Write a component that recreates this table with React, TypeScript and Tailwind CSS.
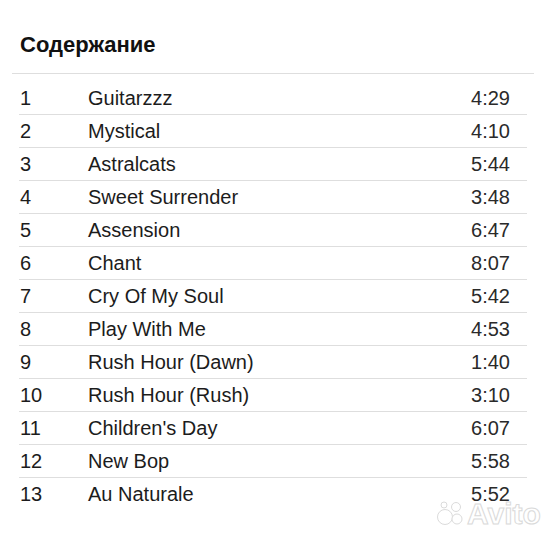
import React from "react";

const tracks: [string, string, string][] = [
  ["1", "Guitarzzz", "4:29"],
  ["2", "Mystical", "4:10"],
  ["3", "Astralcats", "5:44"],
  ["4", "Sweet Surrender", "3:48"],
  ["5", "Assension", "6:47"],
  ["6", "Chant", "8:07"],
  ["7", "Cry Of My Soul", "5:42"],
  ["8", "Play With Me", "4:53"],
  ["9", "Rush Hour (Dawn)", "1:40"],
  ["10", "Rush Hour (Rush)", "3:10"],
  ["11", "Children's Day", "6:07"],
  ["12", "New Bop", "5:58"],
  ["13", "Au Naturale", "5:52"],
];

export default function App() {
  return (
    <div
      className="relative w-[541px] h-[540px] bg-white overflow-hidden text-[#1c1c1c]"
      style={{ fontFamily: '"Liberation Sans", Arial, sans-serif' }}
    >
      <div className="pt-[32px] pl-[20px] text-[22px] leading-[26px] font-bold text-[#111]">
        Содержание
      </div>
      <div className="mt-[15px] ml-[12px] mr-[7px] h-px bg-[#dedede]" />
      <div className="mt-[8px] ml-[19px] mr-[14px]">
        {tracks.map(([n, t, d], i) => (
          <div
            key={n}
            className={`flex items-center h-[33px] text-[20px] leading-[33px] ${
              i < tracks.length - 1 ? "border-b border-[#dedede]" : ""
            }`}
          >
            <div className="w-[69px] pl-[1px]">{n}</div>
            <div className="flex-1">{t}</div>
            <div className="pr-[17px] text-[#2a2a2a]">{d}</div>
          </div>
        ))}
      </div>
      <div className="absolute left-[436px] top-[499px] flex items-center gap-[3px] opacity-90">
        <svg width="28" height="26" viewBox="0 0 28 26">
          <g fill="#ffffff" stroke="#d8d8d8" strokeWidth="1">
            <circle cx="9" cy="16" r="7.5" />
            <circle cx="20" cy="6" r="4.5" />
            <circle cx="21" cy="18" r="5" />
            <circle cx="8" cy="4" r="3" />
          </g>
        </svg>
        <span
          className="text-[30px] leading-[30px] font-bold text-white"
          style={{ WebkitTextStroke: "1px #d6d6d6", fontFamily: '"Liberation Sans", Arial, sans-serif' }}
        >
          Avito
        </span>
      </div>
    </div>
  );
}
